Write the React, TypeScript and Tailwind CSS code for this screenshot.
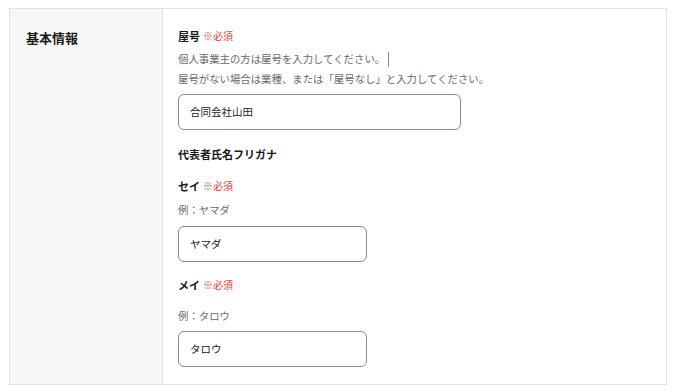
import React from "react";

const font = { fontFamily: '"Noto Sans CJK JP", "Noto Sans", sans-serif' };

function Label({ text, required = true, className = "" }: { text: string; required?: boolean; className?: string }) {
  return (
    <div className={`flex items-center h-[16px] leading-[16px] ${className}`}>
      <span className="text-[11px] font-bold text-[#1a1a1a]">{text}</span>
      {required && <span className="ml-[3px] text-[10px] text-[#e53e3e]">※必須</span>}
    </div>
  );
}

function Input({ value, w }: { value: string; w: string }) {
  return (
    <div className={`${w} h-[36px] border border-[#8c8c8c] rounded-[6px] flex items-center pl-[11px] text-[10.5px] text-[#1a1a1a] bg-white`}>
      {value}
    </div>
  );
}

export default function App() {
  return (
    <div className="w-[674px] h-[392px] bg-white pt-[8px] pl-[9px]" style={font}>
      <div className="w-[658px] border border-[#e2e2e2] flex">
        <div className="w-[153px] shrink-0 bg-[#f7f7f8] border-r border-[#e2e2e2] pl-[16px] pt-[20px]">
          <div className="text-[13px] font-bold leading-[18px] text-[#1a1a1a]">基本情報</div>
        </div>
        <div className="flex-1 pl-[15px] pt-[19px] pb-[17px]">
          <Label text="屋号" />
          <div className="mt-[5px] text-[10.4px] leading-[20px] text-[#6b6b6b]">
            <div className="flex items-center">
              個人事業主の方は屋号を入力してください。
              <span className="inline-block w-px h-[15px] bg-[#888] ml-[3px]" />
            </div>
            <div>屋号がない場合は業種、または「屋号なし」と入力してください。</div>
          </div>
          <div className="mt-[5px]">
            <Input value="合同会社山田" w="w-[283px]" />
          </div>
          <div className="mt-[16px] h-[16px] leading-[16px] text-[11px] font-bold text-[#1a1a1a]">代表者氏名フリガナ</div>
          <Label text="セイ" className="mt-[16px]" />
          <div className="mt-[8px] h-[16px] leading-[16px] text-[10.4px] text-[#6b6b6b]">例：ヤマダ</div>
          <div className="mt-[8px]">
            <Input value="ヤマダ" w="w-[189px]" />
          </div>
          <Label text="メイ" className="mt-[15px]" />
          <div className="mt-[15px] h-[16px] leading-[16px] text-[10.4px] text-[#6b6b6b]">例：タロウ</div>
          <div className="mt-[7px]">
            <Input value="タロウ" w="w-[189px]" />
          </div>
        </div>
      </div>
    </div>
  );
}
